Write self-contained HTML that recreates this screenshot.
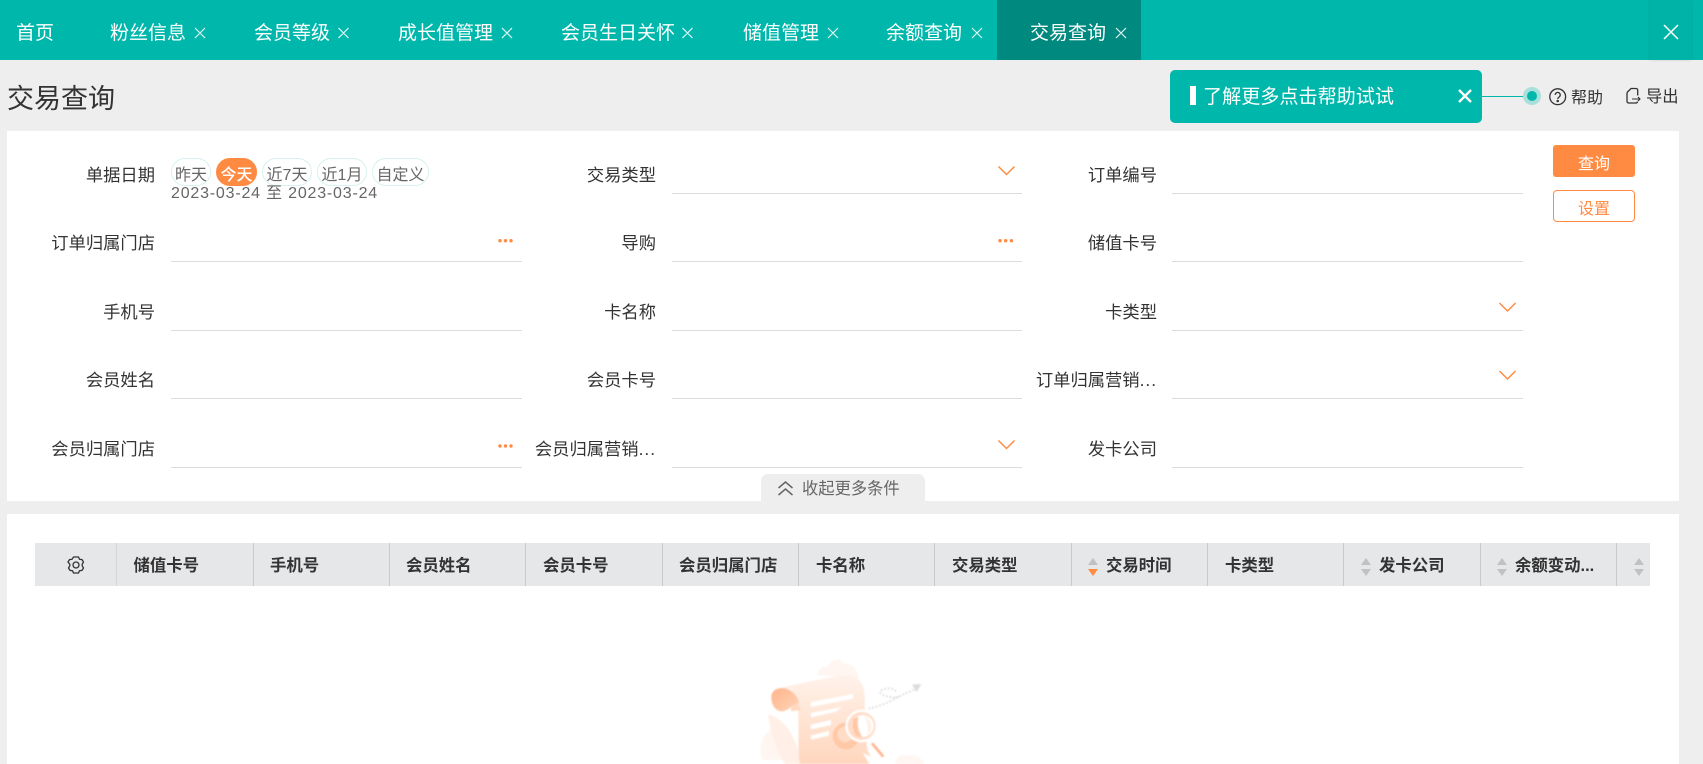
<!DOCTYPE html>
<html lang="zh-CN">
<head>
<meta charset="utf-8">
<title>交易查询</title>
<style>
html,body{margin:0;padding:0}
body{width:1703px;height:764px;overflow:hidden;background:#eeeeee;position:relative;font-family:"Liberation Sans","Noto Sans CJK SC",sans-serif;color:#333}
.a{position:absolute}
.t{position:absolute;line-height:24px;height:24px;white-space:nowrap}
.tab{color:#fff;font-size:19px;top:22px}
.l{font-size:17.300px;color:#333;width:150px;text-align:right}
.l i{font-style:normal;letter-spacing:1px}
.ln{position:absolute;height:1px;background:#dcdcdc;width:351px}
.chip{position:absolute;top:158px;height:26px;line-height:33px;border:1px solid #d6f1ef;border-radius:14px;text-align:center;font-size:16px;color:#666;box-sizing:content-box;overflow:hidden}
.h{font-size:16.400px;font-weight:bold;color:#333;top:554px}
.sep{position:absolute;top:543px;height:43px;width:1px;background:#c8cacc}
</style>
</head>
<body>
<!-- top bar -->
<div class="a" style="left:0;top:0;width:1703px;height:60px;background:#00b7ab"></div>
<div class="a" style="left:997px;top:0;width:144px;height:60px;background:#00897e"></div>
<div class="a" style="left:1650px;top:0;width:41px;height:60px;background:#00b3a7;box-shadow:0 0 3px rgba(0,0,0,.12)"></div>
<span class="t tab" style="left:16px">首页</span>
<span class="t tab" style="left:110px">粉丝信息</span>
<span class="t tab" style="left:254px">会员等级</span>
<span class="t tab" style="left:398px">成长值管理</span>
<span class="t tab" style="left:561px">会员生日关怀</span>
<span class="t tab" style="left:743px">储值管理</span>
<span class="t tab" style="left:886px">余额查询</span>
<span class="t tab" style="left:1030px">交易查询</span>
<svg class="a" style="left:0;top:0" width="1703" height="60" fill="none" stroke="#e6f8f6" stroke-width="1.2">
<path d="M195 28l10 10m0-10l-10 10M338.500 28l10 10m0-10l-10 10M502 28l10 10m0-10l-10 10M682.500 28l10 10m0-10l-10 10M828 28l10 10m0-10l-10 10M972 28l10 10m0-10l-10 10M1116 28l10 10m0-10l-10 10"/>
<path d="M1664 25l14 14m0-14l-14 14" stroke="#fff" stroke-width="1.5"/>
</svg>

<!-- title row -->
<span class="t" style="left:7px;top:83px;height:32px;line-height:32px;font-size:27px;color:#333">交易查询</span>

<!-- form panel -->
<div class="a" style="left:7px;top:131px;width:1672px;height:370px;background:#fff"></div>

<!-- tooltip -->
<div class="a" style="left:1170px;top:70px;width:312px;height:53px;background:#00b7ab;border-radius:5px"></div>
<div class="a" style="left:1190px;top:86px;width:6px;height:19px;background:#fff"></div>
<span class="t" style="left:1203px;top:86px;font-size:19.100px;color:#fff">了解更多点击帮助试试</span>
<svg class="a" style="left:1455px;top:86px" width="20" height="20" fill="none" stroke="#fff" stroke-width="2.4"><path d="M4 4l12 12m0-12L4 16"/></svg>
<div class="a" style="left:1482px;top:95.500px;width:42px;height:1px;background:#00b7ab"></div>
<div class="a" style="left:1523px;top:87px;width:18px;height:18px;border-radius:50%;background:#a9e0dc"></div>
<div class="a" style="left:1527px;top:91px;width:10px;height:10px;border-radius:50%;background:#00b7ab"></div>

<!-- help/export -->
<svg class="a" style="left:1548px;top:87px" width="20" height="20" fill="none" stroke="#333" stroke-width="1.300"><circle cx="9.700" cy="9.700" r="7.900"/><path d="M7.200 7.900a2.500 2.500 0 1 1 3.900 2.100c-.9.600-1.400 1-1.400 2"/><circle cx="9.700" cy="14" r=".6" fill="#333"/></svg>
<span class="t" style="left:1571px;top:87px;font-size:16px;color:#333">帮助</span>
<svg class="a" style="left:1624px;top:86px" width="17" height="19" fill="none" stroke="#333" stroke-width="1.300"><path d="M3 6.500L7 2.500h5a1.700 1.700 0 0 1 1.700 1.700V9.500"/><path d="M13.500 15.500a1.700 1.700 0 0 1-1.700 1.500H4.700A1.700 1.700 0 0 1 3 15.300V6.500"/><path d="M8 13h8m-2-2l2 2-2 2" stroke-width="1.100"/></svg>
<span class="t" style="left:1646px;top:85px;font-size:16.300px;color:#333">导出</span>

<!-- labels col 1 -->
<span class="t l" style="left:5px;top:163px">单据日期</span>
<span class="t l" style="left:5px;top:231px">订单归属门店</span>
<span class="t l" style="left:5px;top:300px">手机号</span>
<span class="t l" style="left:5px;top:368px">会员姓名</span>
<span class="t l" style="left:5px;top:437px">会员归属门店</span>
<!-- labels col 2 -->
<span class="t l" style="left:506px;top:163px">交易类型</span>
<span class="t l" style="left:506px;top:231px">导购</span>
<span class="t l" style="left:506px;top:300px">卡名称</span>
<span class="t l" style="left:506px;top:368px">会员卡号</span>
<span class="t l" style="left:506px;top:437px">会员归属营销<i>...</i></span>
<!-- labels col 3 -->
<span class="t l" style="left:1007px;top:163px">订单编号</span>
<span class="t l" style="left:1007px;top:231px">储值卡号</span>
<span class="t l" style="left:1007px;top:300px">卡类型</span>
<span class="t l" style="left:1007px;top:368px">订单归属营销<i>...</i></span>
<span class="t l" style="left:1007px;top:437px">发卡公司</span>

<!-- lines -->
<div class="ln" style="left:672px;top:193px;width:350px"></div>
<div class="ln" style="left:1172px;top:193px"></div>
<div class="ln" style="left:171px;top:261px"></div>
<div class="ln" style="left:672px;top:261px;width:350px"></div>
<div class="ln" style="left:1172px;top:261px"></div>
<div class="ln" style="left:171px;top:330px"></div>
<div class="ln" style="left:672px;top:330px;width:350px"></div>
<div class="ln" style="left:1172px;top:330px"></div>
<div class="ln" style="left:171px;top:398px"></div>
<div class="ln" style="left:672px;top:398px;width:350px"></div>
<div class="ln" style="left:1172px;top:398px"></div>
<div class="ln" style="left:171px;top:467px"></div>
<div class="ln" style="left:672px;top:467px;width:350px"></div>
<div class="ln" style="left:1172px;top:467px"></div>

<!-- chips -->
<div class="chip" style="left:171px;width:38px">昨天</div>
<div class="chip" style="left:216px;width:39px;background:#ff8b42;border-color:#ff8b42;color:#fff;font-weight:500">今天</div>
<div class="chip" style="left:262px;width:48px">近7天</div>
<div class="chip" style="left:317px;width:48px">近1月</div>
<div class="chip" style="left:372px;width:55px">自定义</div>
<span class="t" style="left:171px;top:182px;font-size:16px;color:#666;letter-spacing:.8px">2023-03-24 至 2023-03-24</span>

<!-- chevrons and dots -->
<svg class="a" style="left:0;top:0" width="1703" height="500" fill="none" stroke="#ff8b42" stroke-width="1.500">
<path d="M998.500 166.500l8 8 8-8M998.500 440.500l8 8 8-8M1499.500 303l8 8 8-8M1499.500 371l8 8 8-8"/>
<g fill="#ff8b42" stroke="none">
<circle cx="500" cy="240.700" r="1.700"/><circle cx="505.500" cy="240.700" r="1.700"/><circle cx="511" cy="240.700" r="1.700"/>
<circle cx="1000" cy="240.700" r="1.700"/><circle cx="1005.700" cy="240.700" r="1.700"/><circle cx="1011.400" cy="240.700" r="1.700"/>
<circle cx="500" cy="446" r="1.700"/><circle cx="505.500" cy="446" r="1.700"/><circle cx="511" cy="446" r="1.700"/>
</g>
</svg>

<!-- buttons -->
<div class="a" style="left:1553px;top:145px;width:82px;height:32px;line-height:39px;background:#ff8b42;border-radius:3px;color:#fff;text-align:center;font-size:16px;overflow:hidden">查询</div>
<div class="a" style="left:1553px;top:190px;width:80px;height:30px;line-height:38px;background:#fff;border:1px solid #ff8b42;border-radius:4px;color:#ff8b42;text-align:center;font-size:16px;overflow:hidden">设置</div>

<!-- collapse -->
<div class="a" style="left:761px;top:474px;width:164px;height:27px;background:#eeeeee;border-radius:7px 7px 0 0"></div>
<svg class="a" style="left:777px;top:480px" width="17" height="17" fill="none" stroke="#666" stroke-width="1.500"><path d="M1.500 8l7-6 7 6M1.500 15l7-6 7 6"/></svg>
<span class="t" style="left:802px;top:477px;font-size:16.300px;color:#666">收起更多条件</span>

<!-- table panel -->
<div class="a" style="left:7px;top:514px;width:1672px;height:250px;background:#fff"></div>
<div class="a" style="left:35px;top:543px;width:1615px;height:43px;background:#e6e7e9"></div>
<div class="sep" style="left:116px;background:#d4d5d7"></div>
<div class="sep" style="left:253px"></div>
<div class="sep" style="left:389px"></div>
<div class="sep" style="left:525px"></div>
<div class="sep" style="left:662px"></div>
<div class="sep" style="left:798px"></div>
<div class="sep" style="left:934px"></div>
<div class="sep" style="left:1071px"></div>
<div class="sep" style="left:1207px"></div>
<div class="sep" style="left:1343px"></div>
<div class="sep" style="left:1480px"></div>
<div class="sep" style="left:1616px"></div>
<svg class="a" style="left:66px;top:555px" width="20" height="20" fill="none" stroke="#333" stroke-width="1.300"><path d="M7.500 2h5l1 2.300 2.500.3 1.500 2.400-1.300 2.200v1.600l1.300 2.200-1.500 2.400-2.500.3-1 2.300h-5l-1-2.300-2.500-.3-1.500-2.400 1.300-2.200V9.200L2 7l1.500-2.400 2.500-.3z"/><circle cx="10" cy="10" r="3"/></svg>
<span class="t h" style="left:133.500px">储值卡号</span>
<span class="t h" style="left:270px">手机号</span>
<span class="t h" style="left:406px">会员姓名</span>
<span class="t h" style="left:543px">会员卡号</span>
<span class="t h" style="left:679px">会员归属门店</span>
<span class="t h" style="left:816px">卡名称</span>
<span class="t h" style="left:952px">交易类型</span>
<span class="t h" style="left:1106px">交易时间</span>
<span class="t h" style="left:1225px">卡类型</span>
<span class="t h" style="left:1379px">发卡公司</span>
<span class="t h" style="left:1515px">余额变动...</span>
<svg class="a" style="left:0;top:550px" width="1703" height="30">
<g fill="#bfc1c4">
<path d="M1093 8l5 7h-10zM1366 8l5 7h-10zM1366 26l5-7h-10zM1502 8l5 7h-10zM1502 26l5-7h-10zM1639 8l5 7h-10zM1639 26l5-7h-10z"/>
</g>
<path d="M1093 26l5-7h-10z" fill="#ff8b42"/>
</svg>

<!-- empty illustration -->
<svg class="a" style="left:730px;top:640px" width="230" height="124" viewBox="0 0 690 372">
<defs>
<linearGradient id="g1" x1="0" y1="0" x2="0" y2="1"><stop offset="0" stop-color="#fff2ea"/><stop offset="1" stop-color="#ffd6bd"/></linearGradient>
<linearGradient id="g2" x1="0" y1="0" x2="1" y2="1"><stop offset="0" stop-color="#ffb48a"/><stop offset="1" stop-color="#ffd4b8"/></linearGradient>
<filter id="b" x="-10%" y="-10%" width="120%" height="120%"><feGaussianBlur stdDeviation="2"/></filter>
</defs>
<g filter="url(#b)">
<g fill="#fff6f1">
<path d="M262 105c0-18 18-28 32-24 8-22 36-32 48-10 18-4 42 14 44 44z"/>
<path d="M100 360c-16-26-10-70 20-88 30 10 50 40 66 88z"/>
<path d="M498 372c-2-24 18-34 32-24 18-6 48 4 52 24z"/>
</g>
<path d="M115 222c40 14 80 50 100 150h-50c-30-50-44-90-50-150z" fill="#ffefe6"/>
<path d="M136 148c70-18 130-30 205-42 30-4 58 14 62 50 4 60 0 110 10 175l20 41H210c-8-40-2-100-6-165-2-30-8-48-24-60z" fill="url(#g1)"/>
<path d="M124 172c0-26 30-34 55-22 14 8 26 24 28 38l-22 10c-8 10-24 20-40 14-14-6-21-24-21-40z" fill="url(#g2)"/>
<path d="M183 198l22-10 8 22-30 4z" fill="#ffd9c2"/>
<g fill="#fff">
<path d="M243 186l126-24v14l-126 25z"/>
<path d="M243 219l92-18-16 14-76 17z"/>
<path d="M243 254l60-14v15l-60 13z"/>
<path d="M243 286l54-13v14l-54 12z"/>
</g>
<circle cx="348" cy="288" r="40" fill="#ffc8a6"/>
<circle cx="346" cy="283" r="24" fill="#ffdcc6"/>
<circle cx="395" cy="258" r="49" fill="#fff"/>
<circle cx="395" cy="258" r="42" fill="#ffdcc6"/>
<circle cx="398" cy="258" r="33" fill="#fff"/>
<path d="M372 236c-10 20-6 38 8 52l18 4c-14-18-18-40-12-62z" fill="#ffc7a6"/>
<path d="M402 226c14 8 22 20 22 34 0 10-4 20-12 26 4-22 0-42-10-60z" fill="#fff0e6"/>
<path d="M426 310l34 40" stroke="#fff" stroke-width="16" fill="none"/>
<path d="M426 310l34 40" stroke="#ffb88f" stroke-width="9" fill="none"/>
<path d="M398 338c22 14 50 20 80 18l10 16h-70z" fill="#fff"/>
<path d="M416 206c30-6 66-22 90-36 26-14 50-20 58-28M506 170c-20 6-56-4-56-14 2-10 40-20 50 2" fill="none" stroke="#d6d6d6" stroke-width="5" stroke-dasharray="5 6"/>
<path d="M546 134l28-2-14 24z" fill="#dcdcdc"/>
</g>
</svg>
</body>
</html>
